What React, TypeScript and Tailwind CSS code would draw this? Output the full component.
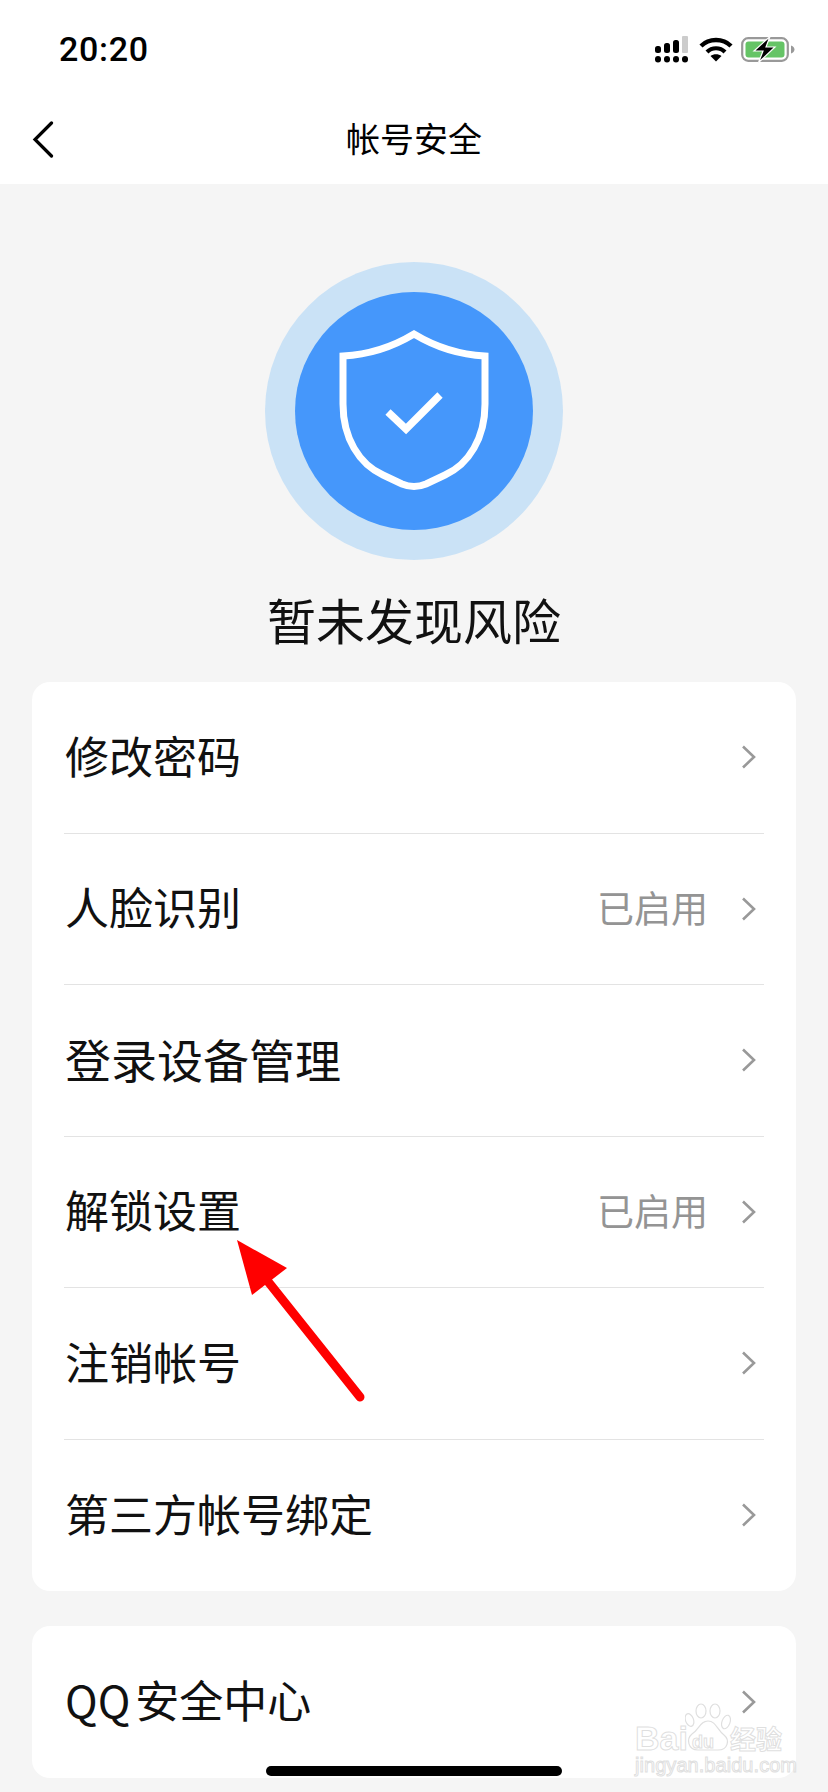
import React from "react";

const cjk = "font-['Noto_Sans_CJK_SC','Noto_Sans',sans-serif]";

const rows = [
  { name: "修改密码" },
  { name: "人脸识别", status: "已启用" },
  { name: "登录设备管理", wide: true },
  { name: "解锁设置", status: "已启用" },
  { name: "注销帐号" },
  { name: "第三方帐号绑定" },
];

function Chevron() {
  return (
    <svg width="15" height="24" viewBox="0 0 15 24" fill="none" className="shrink-0">
      <path d="M2 1.5 L13 12 L2 22.5" stroke="#999" strokeWidth="2.6" />
    </svg>
  );
}

function Row({
  name,
  status,
  wide,
  last,
}: {
  name: React.ReactNode;
  status?: string;
  wide?: boolean;
  last?: boolean;
}) {
  return (
    <div
      className={`flex h-[151.5px] items-center pl-px pr-[8px] ${
        last ? "" : "border-b border-[#e3e3e3]"
      }`}
    >
      <span
        className={`flex-1 pb-[5px] text-[44px] leading-none text-[#111] ${
          wide ? "text-[46px]" : ""
        }`}
      >
        {name}
      </span>
      {status && (
        <span className="mr-[33px] pb-[3px] text-[37px] leading-none text-[#949494]">{status}</span>
      )}
      <Chevron />
    </div>
  );
}

function StatusIcons() {
  return (
    <div className="flex items-center">
      <svg width="34" height="27" viewBox="0 0 34 27" fill="#000">
        <rect x="0" y="10" width="6" height="7" rx="2.5" />
        <rect x="9" y="7" width="6" height="10" rx="2.5" />
        <rect x="18" y="4" width="6" height="13" rx="2.5" />
        <rect x="27" y="0" width="6" height="17" rx="1" fill="#ccc" />
        <rect x="0" y="20" width="6" height="6.5" rx="3" />
        <rect x="9" y="20" width="6" height="6.5" rx="3" />
        <rect x="18" y="20" width="6" height="6.5" rx="3" />
        <rect x="27" y="20" width="6" height="6.5" rx="3" />
      </svg>
      <svg width="34" height="25" viewBox="0 0 34 25" className="ml-[10px]" fill="none">
        <path d="M2 9 C10 1 24 1 32 9" stroke="#000" strokeWidth="4.4" />
        <path d="M8 15 C13 10 21 10 26 15" stroke="#000" strokeWidth="4.2" />
        <path d="M17 24.5 L11.5 19 C14.5 16.5 19.5 16.5 22.5 19 Z" fill="#000" />
      </svg>
      <svg width="54" height="27" viewBox="0 0 54 27" className="ml-[8px]" fill="none">
        <rect x="1.2" y="2.2" width="45.6" height="22.6" rx="6" stroke="#999" strokeWidth="2.2" />
        <rect x="4.5" y="5.5" width="39" height="16" rx="3" fill="#65c466" />
        <path d="M50 9.5 C52.5 10.5 53.5 12 53.5 13.5 C53.5 15 52.5 16.5 50 17.5 Z" fill="#999" />
        <path
          d="M29 0.5 L13 15 H22 L17.5 26.5 L34 11 H25 Z"
          fill="#000"
          stroke="#fff"
          strokeWidth="1.2"
        />
      </svg>
    </div>
  );
}

function Watermark() {
  return (
    <div className="pointer-events-none absolute left-[635px] top-[1703px] h-[72px] w-[150px] font-['Liberation_Sans',sans-serif] text-transparent [-webkit-text-stroke:1px_#dfdfdf]">
      <span className="absolute left-0 top-[18px] text-[34px] font-bold leading-[34px]">Bai</span>
      <svg
        width="46"
        height="48"
        viewBox="0 0 46 48"
        fill="none"
        stroke="#dfdfdf"
        strokeWidth="1.2"
        className="absolute left-[50px] top-0"
      >
        <ellipse cx="4.5" cy="17" rx="4" ry="6.5" transform="rotate(-20 4.5 17)" />
        <ellipse cx="16" cy="8" rx="5" ry="7" />
        <ellipse cx="30" cy="8" rx="5" ry="7" />
        <ellipse cx="41" cy="19" rx="4" ry="7" transform="rotate(20 41 19)" />
        <path d="M23 18 C15 18 14 27 7 31 C1 36 3 47 13 47 H33 C43 47 45 37 39 32 C32 27 31 18 23 18 Z" />
      </svg>
      <span className="absolute left-[57px] top-[30px] text-[18px] font-bold leading-[18px]">du</span>
      <span className={`absolute left-[95px] top-[20px] text-[26px] font-bold leading-[30px] ${cjk}`}>
        经验
      </span>
      <span className="absolute left-0 top-[52px] text-[20px] leading-[20px] tracking-[0.05px] whitespace-nowrap">
        jingyan.baidu.com
      </span>
    </div>
  );
}

export default function App() {
  return (
    <div className={`relative h-[1792px] w-[828px] overflow-hidden bg-[#f5f5f5] ${cjk}`}>
      <header className="h-[184px] bg-white">
        <div className="flex h-[100px] items-start justify-between pl-[59px] pr-[33px] pt-[36px]">
          <span className="font-['Roboto',sans-serif] text-[34px] font-medium leading-[26px] tracking-[0.7px] text-black">
            20:20
          </span>
          <StatusIcons />
        </div>
        <div className="relative flex h-[80px] items-center justify-center">
          <svg
            width="22"
            height="37"
            viewBox="0 0 22 37"
            fill="none"
            className="absolute left-[32px] top-[21px]"
          >
            <path
              d="M19.5 2 L3 18.5 L19.5 35"
              stroke="#000"
              strokeWidth="3.2"
              strokeLinecap="round"
            />
          </svg>
          <span className="pb-[4px] text-[34px] leading-none text-black">帐号安全</span>
        </div>
      </header>

      <section className="flex flex-col items-center pt-[78px]">
        <div className="flex h-[298px] w-[298px] items-center justify-center rounded-full bg-[#cae2f6]">
          <div className="h-[238px] w-[238px] rounded-full bg-[#4597fb]">
            <svg width="238" height="238" viewBox="0 0 238 238" fill="none">
              <path
                d="M119 42 Q86 62 48 64 V112 C48 146 64 172 88 183 L107 192 Q119 197 131 192 L150 183 C174 172 190 146 190 112 V64 Q152 62 119 42 Z"
                stroke="#fff"
                strokeWidth="7"
              />
              <path d="M93 120 L111 137 L145 103" stroke="#fff" strokeWidth="7.5" />
            </svg>
          </div>
        </div>
        <h1 className="mt-[30px] mb-[2px] text-[49px] font-normal leading-[58px] text-[#111]">暂未发现风险</h1>
      </section>

      <div className="mx-[32px] mt-[32px] rounded-[18px] bg-white px-[32px]">
        {rows.map((row, i) => (
          <Row
            key={row.name}
            name={row.name}
            status={row.status}
            wide={row.wide}
            last={i === rows.length - 1}
          />
        ))}
      </div>

      <div className="mx-[32px] mt-[35px] rounded-[18px] bg-white px-[32px]">
        <Row
          name={
            <>
              QQ<span className="ml-[5px]">安全中心</span>
            </>
          }
          last
        />
      </div>

      <svg
        width="140"
        height="175"
        viewBox="0 0 140 175"
        fill="none"
        className="absolute left-[230px] top-[1232px]"
      >
        <path d="M7 8 L57 36 L22 63 Z" fill="#ff0000" />
        <path d="M36 47 L130 165" stroke="#ff0000" strokeWidth="9" strokeLinecap="round" />
      </svg>

      <Watermark />

      <div className="absolute left-[266px] top-[1766px] h-[10px] w-[296px] rounded-full bg-black" />
    </div>
  );
}
